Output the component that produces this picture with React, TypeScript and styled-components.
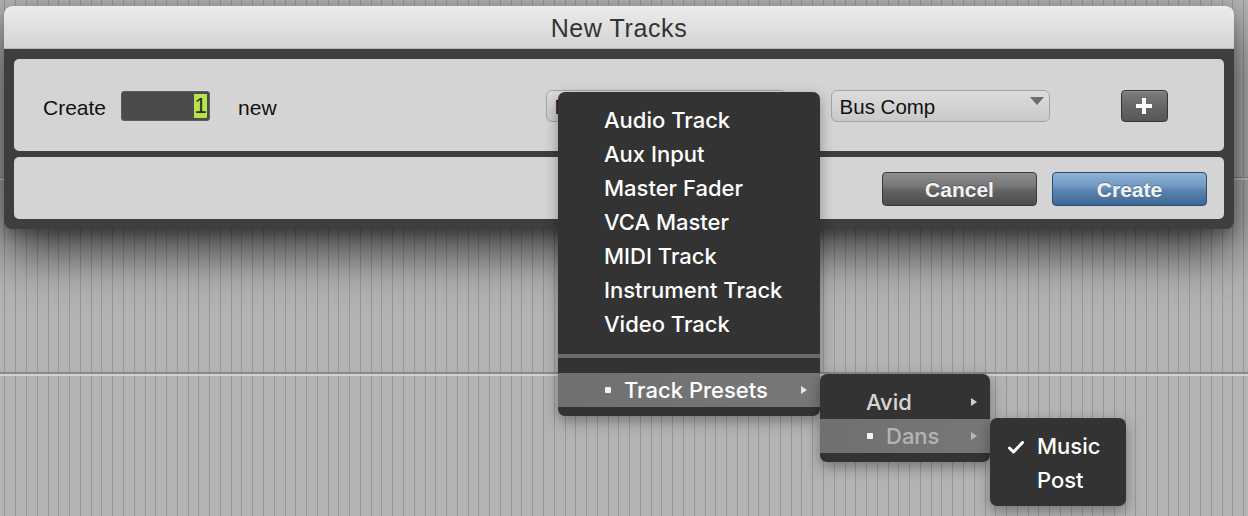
import React from "react";
import styled, { createGlobalStyle } from "styled-components";

const GlobalStyle = createGlobalStyle`
  html, body { margin: 0; padding: 0; background: #b3b3b3; }
  * { box-sizing: border-box; }
`;

const Page = styled.div`
  position: relative;
  width: 1248px;
  height: 516px;
  overflow: hidden;
  padding: 6px 0 0 4px;
  background-color: #b3b3b3;
  background-image:
    linear-gradient(
      to bottom,
      transparent 177px,
      #8e8e8e 177px,
      #8e8e8e 178px,
      #cfcfcf 178px,
      #cfcfcf 180px,
      transparent 180px,
      transparent 372px,
      #8a8a8a 372px,
      #8a8a8a 374px,
      #d2d2d2 374px,
      #d2d2d2 376px,
      transparent 376px
    ),
    repeating-linear-gradient(
      to right,
      transparent 0px,
      transparent 4.5px,
      #979797 4.5px,
      #979797 5.5px,
      transparent 5.5px,
      transparent 10.77px
    );
`;

const Window = styled.div`
  width: 1230px;
  background: #3e3e3e;
  border-radius: 8px;
  overflow: hidden;
  box-shadow: 0 24px 50px rgba(0, 0, 0, 0.65), 0 6px 14px rgba(0, 0, 0, 0.25);
`;

const TitleBar = styled.div`
  height: 43px;
  display: flex;
  align-items: center;
  justify-content: center;
  background: linear-gradient(to bottom, #ececec 0%, #e0e0e0 50%, #d3d3d3 100%);
  border-bottom: 1px solid #b8b8b8;
  font-family: "Liberation Sans", Arial, sans-serif;
  font-size: 25px;
  letter-spacing: 0.6px;
  color: #333;
  padding-top: 3px;
`;

const Body = styled.div`
  display: flex;
  flex-direction: column;
  gap: 6px;
  padding: 10px 10px 10px 10px;
`;

const Panel = styled.div<{ $h: number; $end?: boolean }>`
  height: ${(p) => p.$h}px;
  background: #d4d4d4;
  border-radius: 5px;
  display: flex;
  align-items: center;
  justify-content: ${(p) => (p.$end ? "flex-end" : "flex-start")};
  padding: ${(p) => (p.$end ? "1px 17px 0 0" : "1px 0 0 29px")};
  gap: ${(p) => (p.$end ? "15px" : "0")};
`;

const Label = styled.span<{ $ml?: number }>`
  font-family: "Liberation Sans", Arial, sans-serif;
  font-size: 21px;
  color: #111;
  padding-top: 4px;
  margin-left: ${(p) => p.$ml ?? 0}px;
`;

const NumberField = styled.div`
  width: 89px;
  height: 30px;
  margin-left: 15px;
  background: #4b4b4b;
  border: 1px solid #5c5c5c;
  border-radius: 3px;
  display: flex;
  align-items: center;
  justify-content: flex-end;
  padding-right: 2px;
`;

const Selected = styled.span`
  background: #b6e24a;
  color: #2a2a2a;
  font-family: "Liberation Sans", Arial, sans-serif;
  font-size: 22px;
  line-height: 24px;
  width: 13px;
  text-align: center;
`;

const Popup = styled.div<{ $ml: number; $w: number }>`
  position: relative;
  width: ${(p) => p.$w}px;
  height: 32px;
  margin-left: ${(p) => p.$ml}px;
  background: linear-gradient(to bottom, #dcdcdc 0%, #d2d2d2 55%, #c9c9c9 100%);
  border: 1.5px solid #a3a3a3;
  border-radius: 6px;
  display: flex;
  align-items: center;
  padding: 3px 0 0 8px;
  font-family: "Liberation Sans", Arial, sans-serif;
  font-size: 20.5px;
  color: #111;
`;

const PopupArrow = styled.span`
  position: absolute;
  right: 5px;
  top: 6px;
  width: 0;
  height: 0;
  border-left: 7px solid transparent;
  border-right: 7px solid transparent;
  border-top: 8px solid #6b6b6b;
`;

const PlusButton = styled.div`
  position: relative;
  width: 47px;
  height: 32px;
  margin-left: 71px;
  border: 1.5px solid #363636;
  border-radius: 4px;
  background: linear-gradient(to bottom, #7e7e7e 0%, #666 50%, #565656 100%);
  box-shadow: inset 0 1px 0 rgba(255, 255, 255, 0.15);
  &::before,
  &::after {
    content: "";
    position: absolute;
    background: #fff;
    left: 50%;
    top: 50%;
    transform: translate(-50%, -50%);
  }
  &::before {
    width: 16px;
    height: 4px;
  }
  &::after {
    width: 4px;
    height: 16px;
  }
`;

const ActionButton = styled.div<{ $primary?: boolean }>`
  width: 155px;
  height: 34px;
  border-radius: 4px;
  display: flex;
  align-items: center;
  justify-content: center;
  padding-top: 2px;
  font-family: "Liberation Sans", Arial, sans-serif;
  font-weight: bold;
  font-size: 21px;
  color: #f2f2f2;
  text-shadow: 0 -1px 0 rgba(0, 0, 0, 0.25);
  border: 1.5px solid ${(p) => (p.$primary ? "#2b4d72" : "#3a3a3a")};
  background: ${(p) =>
    p.$primary
      ? "linear-gradient(to bottom, #8fb3d6 0%, #7199c2 40%, #5a84b0 55%, #3e6792 100%)"
      : "linear-gradient(to bottom, #8e8e8e 0%, #777 40%, #626262 55%, #4d4d4d 100%)"};
`;

const Menu = styled.div<{ $left: number; $top: number; $w: number }>`
  position: absolute;
  left: ${(p) => p.$left}px;
  top: ${(p) => p.$top}px;
  width: ${(p) => p.$w}px;
  background: #333333;
  border-radius: 7px;
  padding: 11px 0 9px;
  box-shadow: 0 5px 14px rgba(0, 0, 0, 0.35);
  font-family: Inter, "Open Sans", sans-serif;
  font-size: 22px;
  font-weight: 500;
  color: #fff;
`;

const MenuItem = styled.div<{ $pad: number; $active?: boolean; $color?: string }>`
  position: relative;
  height: 34px;
  display: flex;
  align-items: center;
  gap: 13px;
  padding-left: ${(p) => p.$pad}px;
  color: ${(p) => p.$color ?? "#fff"};
  background: ${(p) =>
    p.$active ? "linear-gradient(to right, #707070, #777777)" : "transparent"};
`;

const Bullet = styled.span`
  width: 6px;
  height: 6px;
  border-radius: 1px;
  background: #f4f4f4;
`;

const SubArrow = styled.span<{ $color?: string }>`
  position: absolute;
  right: 13px;
  top: 50%;
  transform: translateY(-50%);
  width: 0;
  height: 0;
  border-top: 4px solid transparent;
  border-bottom: 4px solid transparent;
  border-left: 6px solid ${(p) => p.$color ?? "#e6e6e6"};
`;

const Separator = styled.div`
  height: 4px;
  margin: 13px 0 15px;
  background: #6a6a6a;
`;

const Check = styled.svg`
  position: absolute;
  left: 18px;
  top: 12px;
`;

const trackTypes = [
  "Audio Track",
  "Aux Input",
  "Master Fader",
  "VCA Master",
  "MIDI Track",
  "Instrument Track",
  "Video Track",
];

export default function App() {
  return (
    <>
      <GlobalStyle />
      <Page>
        <Window>
          <TitleBar>New Tracks</TitleBar>
          <Body>
            <Panel $h={92}>
              <Label>Create</Label>
              <NumberField>
                <Selected>1</Selected>
              </NumberField>
              <Label $ml={28}>new</Label>
              <Popup $ml={269} $w={240}>
                Mono
                <PopupArrow />
              </Popup>
              <Popup $ml={45} $w={219}>
                Bus Comp
                <PopupArrow />
              </Popup>
              <PlusButton />
            </Panel>
            <Panel $h={62} $end>
              <ActionButton>Cancel</ActionButton>
              <ActionButton $primary>Create</ActionButton>
            </Panel>
          </Body>
        </Window>

        <Menu $left={558} $top={92} $w={262}>
          {trackTypes.map((t) => (
            <MenuItem key={t} $pad={46}>
              {t}
            </MenuItem>
          ))}
          <Separator />
          <MenuItem $pad={47} $active>
            <Bullet />
            Track Presets
            <SubArrow />
          </MenuItem>
        </Menu>

        <Menu $left={820} $top={374} $w={170}>
          <MenuItem $pad={46} $color="#d6d6d6">
            Avid
            <SubArrow $color="#d0d0d0" />
          </MenuItem>
          <MenuItem $pad={47} $active $color="#b4b4b4">
            <Bullet />
            Dans
            <SubArrow $color="#b8b8b8" />
          </MenuItem>
        </Menu>

        <Menu $left={990} $top={418} $w={136}>
          <MenuItem $pad={47}>
            <Check width="16" height="13" viewBox="0 0 16 13">
              <path
                d="M1.5 7 L5.5 11 L14.5 1.5"
                fill="none"
                stroke="#fff"
                strokeWidth="3"
                strokeLinecap="round"
                strokeLinejoin="round"
              />
            </Check>
            Music
          </MenuItem>
          <MenuItem $pad={47}>Post</MenuItem>
        </Menu>
      </Page>
    </>
  );
}
